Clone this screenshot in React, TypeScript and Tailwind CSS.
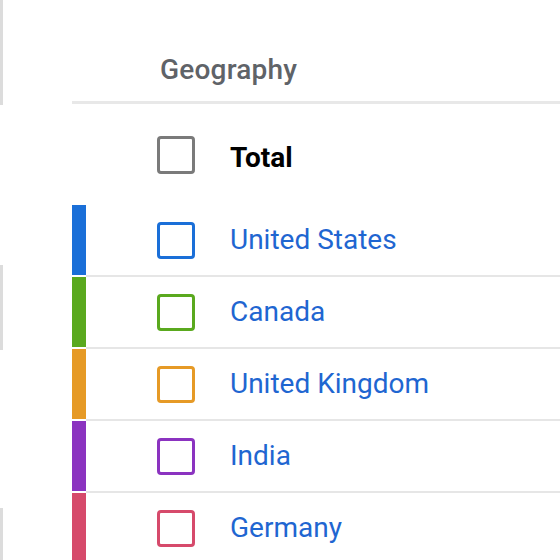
const rows = [
  { name: "United States", bar: "bg-[#1a6fd8]", box: "border-[#1a6fd8]" },
  { name: "Canada", bar: "bg-[#5aa91e]", box: "border-[#5aa91e]" },
  { name: "United Kingdom", bar: "bg-[#e69a26]", box: "border-[#e69a26]" },
  { name: "India", bar: "bg-[#8b33c0]", box: "border-[#8b33c0]" },
  { name: "Germany", bar: "bg-[#d64a6b]", box: "border-[#d64a6b]" },
];

export default function App() {
  return (
    <div
      className="flex w-[560px] h-[560px] overflow-hidden bg-white"
      style={{ fontFamily: "Roboto, 'Noto Sans', sans-serif" }}
    >
      {/* faded edge of the panel behind */}
      <div className="flex flex-col w-[72px] shrink-0">
        <div className="w-[3px] h-[105px] bg-[#dcdcdc]" />
        <div className="h-[160px]" />
        <div className="w-[3px] h-[85px] bg-[#dcdcdc]" />
        <div className="h-[158px]" />
        <div className="w-[3px] h-[52px] bg-[#dcdcdc]" />
      </div>

      <div className="flex-1 flex flex-col">
        {/* Header */}
        <div className="h-[104px] shrink-0 flex items-end pl-[88px] pb-[17px] border-b-[3px] border-[#e8e8e8]">
          <span className="text-[28px] leading-none font-medium text-[#5f6368] tracking-[0.2px]">Geography</span>
        </div>

        {/* Total */}
        <div className="h-[101px] shrink-0 flex items-center pl-[85px]">
          <div className="w-[38px] h-[38px] rounded-[4px] border-[3px] border-[#7a7a7a]" />
          <span className="ml-[35px] mt-[6px] text-[28px] leading-none font-bold text-black">Total</span>
        </div>

        {/* Countries */}
        {rows.map((r) => (
          <div key={r.name} className="flex shrink-0">
            <div className={`w-[14px] h-[70px] shrink-0 ${r.bar}`} />
            <div className="flex-1 h-[72px] flex items-center pl-[71px] border-b-2 border-[#e6e6e6]">
              <div className={`w-[38px] h-[37px] rounded-[4px] border-[3px] ${r.box}`} />
              <span className="ml-[35px] text-[28px] leading-none text-[#1f66d1]">{r.name}</span>
            </div>
          </div>
        ))}
      </div>
    </div>
  );
}
